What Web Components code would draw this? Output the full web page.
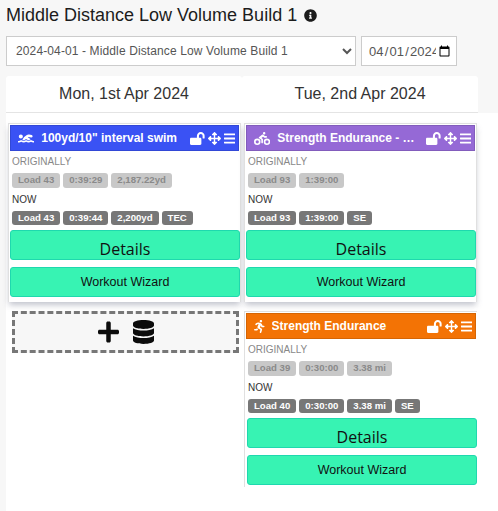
<!DOCTYPE html>
<html>
<head>
<meta charset="utf-8">
<title>Plan</title>
<style>
  html, body { margin: 0; height: 511px; overflow: hidden; background: #f7f7f7; }
  body { font-family: "Liberation Sans", Arial, sans-serif; color: #222; }
</style>
</head>
<body>
<plan-page>
  <plan-header slot="header" title="Middle Distance Low Volume Build 1"
    option="2024-04-01 - Middle Distance Low Volume Build 1" date="2024-04-01"></plan-header>

  <day-column slot="days" label="Mon, 1st Apr 2024">
    <workout-card title="100yd/10&quot; interval swim" color="#3a52f4" icon="swim"
      was="Load 43|0:39:29|2,187.22yd" now="Load 43|0:39:44|2,200yd|TEC"></workout-card>
    <add-workout></add-workout>
  </day-column>

  <day-column slot="days" label="Tue, 2nd Apr 2024">
    <workout-card title="Strength Endurance - Low Volume" color="#9569d6" icon="bike"
      was="Load 93|1:39:00" now="Load 93|1:39:00|SE"></workout-card>
    <workout-card class="last" title="Strength Endurance" color="#f37305" icon="run"
      was="Load 39|0:30:00|3.38 mi" now="Load 40|0:30:00|3.38 mi|SE"></workout-card>
  </day-column>
</plan-page>

<script>
// Icon paths, all drawn on their own viewBox
const ICONS = {
  info: ['0 0 512 512', 'M256 8C119.043 8 8 119.083 8 256c0 136.997 111.043 248 248 248s248-111.003 248-248C504 119.083 392.957 8 256 8zm0 110c23.196 0 42 18.804 42 42s-18.804 42-42 42-42-18.804-42-42 18.804-42 42-42zm56 254c0 6.627-5.373 12-12 12h-88c-6.627 0-12-5.373-12-12v-24c0-6.627 5.373-12 12-12h12v-64h-12c-6.627 0-12-5.373-12-12v-24c0-6.627 5.373-12 12-12h64c6.627 0 12 5.373 12 12v100h12c6.627 0 12 5.373 12 12v24z'],
  lock: ['0 0 576 512', 'M423.5 0C339.5.3 272 69.5 272 153.5V224H48c-26.5 0-48 21.5-48 48v192c0 26.5 21.5 48 48 48h352c26.5 0 48-21.5 48-48V272c0-26.5-21.5-48-48-48h-48v-71.1c0-39.6 31.7-72.5 71.3-72.9 40-.4 72.7 32.1 72.7 72v80c0 13.3 10.7 24 24 24h32c13.3 0 24-10.7 24-24v-80C576 68 507.5-.3 423.5 0z'],
  move: ['0 0 512 512', 'M352.201 425.775l-79.196 79.196c-9.373 9.373-24.568 9.373-33.941 0l-79.196-79.196c-15.119-15.119-4.411-40.971 16.971-40.97h51.162L228 284H127.196v51.162c0 21.382-25.851 32.09-40.971 16.971L7.029 272.937c-9.373-9.373-9.373-24.569 0-33.941L86.225 159.8c15.119-15.119 40.971-4.411 40.971 16.971V228H228V127.196h-51.23c-21.382 0-32.09-25.851-16.971-40.971l79.196-79.196c9.373-9.373 24.568-9.373 33.941 0l79.196 79.196c15.119 15.119 4.411 40.971-16.971 40.971h-51.162V228h100.804v-51.162c0-21.382 25.851-32.09 40.97-16.971l79.196 79.196c9.373 9.373 9.373 24.569 0 33.941L425.773 352.2c-15.119 15.119-40.971 4.411-40.97-16.971V284H284v100.804h51.23c21.382 0 32.09 25.851 16.971 40.971z'],
  bars: ['0 0 448 512', 'M16 132h416c8.837 0 16-7.163 16-16V76c0-8.837-7.163-16-16-16H16C7.163 60 0 67.163 0 76v40c0 8.837 7.163 16 16 16zm0 160h416c8.837 0 16-7.163 16-16v-40c0-8.837-7.163-16-16-16H16c-8.837 0-16 7.163-16 16v40c0 8.837 7.163 16 16 16zm0 160h416c8.837 0 16-7.163 16-16v-40c0-8.837-7.163-16-16-16H16c-8.837 0-16 7.163-16 16v40c0 8.837 7.163 16 16 16z'],
  plus: ['0 0 448 512', 'M416 208H272V64c0-17.67-14.33-32-32-32h-32c-17.67 0-32 14.33-32 32v144H32c-17.67 0-32 14.33-32 32v32c0 17.67 14.33 32 32 32h144v144c0 17.67 14.33 32 32 32h32c17.67 0 32-14.33 32-32V304h144c17.67 0 32-14.33 32-32v-32c0-17.67-14.33-32-32-32z'],
  database: ['0 0 448 512', 'M448 73.143v45.714C448 159.143 347.667 192 224 192S0 159.143 0 118.857V73.143C0 32.857 100.333 0 224 0s224 32.857 224 73.143zM448 176v102.857C448 319.143 347.667 352 224 352S0 319.143 0 278.857V176c48.125 33.143 136.208 48.572 224 48.572S399.874 209.143 448 176zm0 160v102.857C448 479.143 347.667 512 224 512S0 479.143 0 438.857V336c48.125 33.143 136.208 48.572 224 48.572S399.874 369.143 448 336z'],
  swim: ['0 0 640 512', 'M189.61 310.58c3.54 3.26 15.27 9.42 34.39 9.42s30.86-6.16 34.39-9.42c16.02-14.77 34.5-22.58 53.46-22.58h16.3c18.96 0 37.45 7.81 53.46 22.58 3.54 3.26 15.27 9.42 34.39 9.42s30.86-6.16 34.39-9.42c14.86-13.71 31.88-21.12 49.39-22.16l-112.84-80.6 18-12.86c3.64-2.58 8.28-3.52 12.62-2.61l100.35 21.53c25.91 5.53 51.44-10.97 57-36.88 5.55-25.92-10.95-51.44-36.88-57L437.68 98.47c-30.73-6.58-63.02.12-88.56 18.38l-80.02 57.17c-10.38 7.39-19.36 16.44-26.72 26.94L173.75 299c5.47 3.23 10.82 6.93 15.86 11.58zM624 352h-16c-26.04 0-45.8-8.42-56.09-17.9-8.9-8.21-19.66-14.1-31.77-14.1h-16.3c-12.11 0-22.87 5.89-31.77 14.1C461.8 343.58 442.04 352 416 352s-45.8-8.42-56.09-17.9c-8.9-8.21-19.66-14.1-31.77-14.1h-16.3c-12.11 0-22.87 5.89-31.77 14.1C269.8 343.58 250.04 352 224 352s-45.8-8.42-56.09-17.9c-8.9-8.21-19.66-14.1-31.77-14.1h-16.3c-12.11 0-22.87 5.89-31.77 14.1C77.8 343.58 58.04 352 32 352H16c-8.84 0-16 7.16-16 16v32c0 8.84 7.16 16 16 16h16c38.62 0 72.72-12.19 96-31.84 23.28 19.66 57.38 31.84 96 31.84s72.72-12.19 96-31.84c23.28 19.66 57.38 31.84 96 31.84s72.72-12.19 96-31.84c23.28 19.66 57.38 31.84 96 31.84h16c8.84 0 16-7.16 16-16v-32c0-8.84-7.16-16-16-16zm-512-96c44.18 0 80-35.82 80-80s-35.82-80-80-80-80 35.82-80 80 35.82 80 80 80z'],
  bike: ['0 0 640 512', 'M400 96a48 48 0 1 0-48-48 48 48 0 0 0 48 48zm-4 121a31.9 31.9 0 0 0 20 7h64a32 32 0 0 0 0-64h-52.78L356 103a31.94 31.94 0 0 0-40.81.68l-112 96a32 32 0 0 0 3.08 50.92L288 305.12V416a32 32 0 0 0 64 0V288a32 32 0 0 0-14.25-26.62l-41.36-27.57 58.25-49.92zm116 39a128 128 0 1 0 128 128 128 128 0 0 0-128-128zm0 192a64 64 0 1 1 64-64 64 64 0 0 1-64 64zM128 256a128 128 0 1 0 128 128 128 128 0 0 0-128-128zm0 192a64 64 0 1 1 64-64 64 64 0 0 1-64 64z'],
  run: ['0 0 416 512', 'M272 96c26.51 0 48-21.49 48-48S298.51 0 272 0s-48 21.49-48 48 21.49 48 48 48zM113.69 317.47l-14.8 34.52H32c-17.67 0-32 14.33-32 32s14.33 32 32 32h77.45c19.25 0 36.58-11.44 44.11-29.09l8.79-20.52-10.67-6.3c-17.32-10.23-30.06-25.37-37.99-42.61zM384 223.99h-44.03l-26.06-53.25c-12.5-25.55-35.45-44.23-61.78-50.94l-71.08-21.14c-28.3-6.8-57.77-.55-80.84 17.14l-39.67 30.41c-14.03 10.75-16.69 30.83-5.92 44.86s30.84 16.66 44.86 5.92l39.69-30.41c7.67-5.89 17.44-8 25.27-6.14l14.7 4.37-37.46 87.39c-12.62 29.48-1.31 64.01 26.3 80.31l84.98 50.17-27.47 87.73c-5.28 16.86 4.11 34.81 20.97 40.09 3.19 1 6.41 1.48 9.58 1.48 13.61 0 26.23-8.77 30.52-22.45l31.64-101.06c5.91-20.77-2.89-43.08-21.64-54.39l-61.24-36.14 31.31-78.28 20.27 41.43c8 16.34 24.92 26.89 43.11 26.89H384c17.67 0 32-14.33 32-32s-14.33-31.99-32-31.99z']
};

function svgIcon(name, height) {
  const [box, d] = ICONS[name];
  const parts = box.split(' ');
  const width = height * parts[2] / parts[3];
  return `<svg width="${width}" height="${height}" viewBox="${box}" fill="currentColor" style="display:block;flex:none"><path d="${d}"/></svg>`;
}

class PlanPage extends HTMLElement {
  constructor() {
    super();
    this.attachShadow({mode: 'open'});
    this.shadowRoot.innerHTML = `
      <style>
      :host { display: block; height: 511px; }
      .days { display: grid; grid-template-columns: 236px 236px 1fr; margin-left: 6px; height: 435px;
        background: linear-gradient(#f7f7f7 37px, #fff 37px); }
      </style>
      <slot name="header"></slot>
      <div class="days"><slot name="days"></slot></div>
    `;
  }
}

class PlanHeader extends HTMLElement {
  constructor() {
    super();
    this.attachShadow({mode: 'open'});
  }

  connectedCallback() {
    const title = this.getAttribute('title');
    const option = this.getAttribute('option');
    const date = this.getAttribute('date');
    this.shadowRoot.innerHTML = `
      <style>
      :host { display: block; padding: 4px 6px 10px; height: 62px; box-sizing: border-box; height: 76px; }
      h1 { display: flex; align-items: center; gap: 7px; margin: 0 0 10px; height: 22px;
        font: 400 18px/22px "Liberation Sans", Arial, sans-serif; color: #1c1c1c; }
      .row { display: flex; gap: 5px; }
      select, input { box-sizing: border-box; height: 30px; background: #fff; border: 1px solid #ccc;
        border-radius: 0; font: 12px "Liberation Sans", Arial, sans-serif; color: #555; letter-spacing: .12px; outline: 0; }
      select { width: 350px; padding: 0 0 0 5px; }
      input { width: 96px; padding: 0 3px 0 6px; font-size: 13px; }
      </style>
      <h1>${title}${svgIcon('info', 13)}</h1>
      <div class="row">
        <select><option>${option}</option></select>
        <input type="date" value="${date}">
      </div>
    `;
  }
}

class DayColumn extends HTMLElement {
  constructor() {
    super();
    this.attachShadow({mode: 'open'});
  }

  connectedCallback() {
    this.shadowRoot.innerHTML = `
      <style>
      :host { display: block; }
      .label { height: 37px; box-sizing: border-box; border-bottom: 1px solid #e4e4e4; background: #fff;
        border-radius: 3px 3px 0 0; text-align: center;
        font: 16px/36px "Liberation Sans", Arial, sans-serif; color: #333; }
      .cards { display: flex; flex-direction: column; gap: 9px; padding: 10px 1px 0 2px; }
      </style>
      <div class="label">${this.getAttribute('label')}</div>
      <div class="cards"><slot></slot></div>
    `;
  }
}

class StatBadge extends HTMLElement {
  constructor() {
    super();
    this.attachShadow({mode: 'open'});
    this.shadowRoot.innerHTML = `
      <style>
      :host { display: inline-block; padding: 0 6px; height: 14.5px; border-radius: 3px; background: #777; color: #fff;
        font: 700 9.6px/14px "Liberation Sans", Arial, sans-serif; white-space: nowrap; }
      :host([old]) { background: #c8c8c8; color: #8a8a8a; }
      .hint { display: inline-block; line-height: 10px; border-bottom: 1px dashed currentColor; }
      </style>
      <slot></slot>
    `;
  }
}

class WorkoutCard extends HTMLElement {
  constructor() {
    super();
    this.attachShadow({mode: 'open'});
  }

  badges(list, old) {
    return list.split('|').map((txt, i, all) => {
      const hinted = txt.startsWith('Load') ? 'Load' : (i === 3 || /^(SE|TEC)$/.test(txt)) ? txt : '';
      const inner = hinted ? `<span class="hint">${hinted}</span>${txt.slice(hinted.length)}` : txt;
      return `<stat-badge ${old ? 'old' : ''}>${inner}</stat-badge>`;
    }).join('');
  }

  connectedCallback() {
    const color = this.getAttribute('color');
    this.shadowRoot.innerHTML = `
      <style>
      :host { display: block; box-sizing: border-box; background: #fff; border: 1px solid #e0e0e0; border-bottom: 0;
        box-shadow: 0 4px 6px -1px rgba(120,125,145,.45); padding-bottom: 5px; }
      :host(.last) { box-shadow: none; padding-bottom: 2px; border-right: 0; }
      .head { display: flex; align-items: center; height: 26px; margin: 1px 1px 0; padding: 0 3px 0 7px; gap: 7px;
        background: ${color}; color: #fff; border: 1px solid rgba(0,0,0,.12); box-sizing: border-box; }
      .title { flex: 1; min-width: 0; overflow: hidden; white-space: nowrap; text-overflow: ellipsis;
        font: 700 12px/24px "Liberation Sans", Arial, sans-serif; }
      .tools { display: flex; align-items: center; gap: 3px; }
      .body { padding: 0 3px; }
      .cap { font: 10px/12px "Liberation Sans", Arial, sans-serif; color: #333; margin: 0; padding-left: 0; }
      .cap.old { color: #888; padding-top: 5px; }
      .cap.new { padding-top: 6px; }
      .row { display: flex; gap: 3px; padding-top: 5px; }
      .btn { display: block; box-sizing: border-box; height: 30px; margin: 0 0 0 1px; width: 230px;
        background: #37f3b3; border: 1px solid #1fd8ae; border-radius: 3px; text-align: center; color: #111; }
      .details { font: 16px/36px "Open Sans", sans-serif; height: 30px; margin-top: 5px; overflow: hidden; }
      .wizard { font: 12.5px/28px "Liberation Sans", Arial, sans-serif; margin-top: 7px; }
      :host(.last) .btn { margin-left: 2px; }
      </style>
      <div class="head">
        ${svgIcon(this.getAttribute('icon'), 13)}
        <div class="title">${this.getAttribute('title')}</div>
        <div class="tools">${svgIcon('lock', 13)}${svgIcon('move', 13)}${svgIcon('bars', 13)}</div>
      </div>
      <div class="body">
        <p class="cap old">ORIGINALLY</p>
        <div class="row">${this.badges(this.getAttribute('was'), true)}</div>
        <p class="cap new">NOW</p>
        <div class="row">${this.badges(this.getAttribute('now'), false)}</div>
      </div>
      <div class="btn details">Details</div>
      <div class="btn wizard">Workout Wizard</div>
    `;
  }
}

class AddWorkout extends HTMLElement {
  constructor() {
    super();
    this.attachShadow({mode: 'open'});
    this.shadowRoot.innerHTML = `
      <style>
      :host { display: flex; align-items: center; justify-content: center; gap: 14px; box-sizing: border-box;
        height: 42px; margin: 0 2px 0 4px; background: #f7f7f7; border: 3px dashed #777; color: #0c0c0c; }
      </style>
      ${svgIcon('plus', 24)}${svgIcon('database', 24)}
    `;
  }
}

customElements.define('plan-page', PlanPage);
customElements.define('plan-header', PlanHeader);
customElements.define('day-column', DayColumn);
customElements.define('stat-badge', StatBadge);
customElements.define('workout-card', WorkoutCard);
customElements.define('add-workout', AddWorkout);
</script>
</body>
</html>
